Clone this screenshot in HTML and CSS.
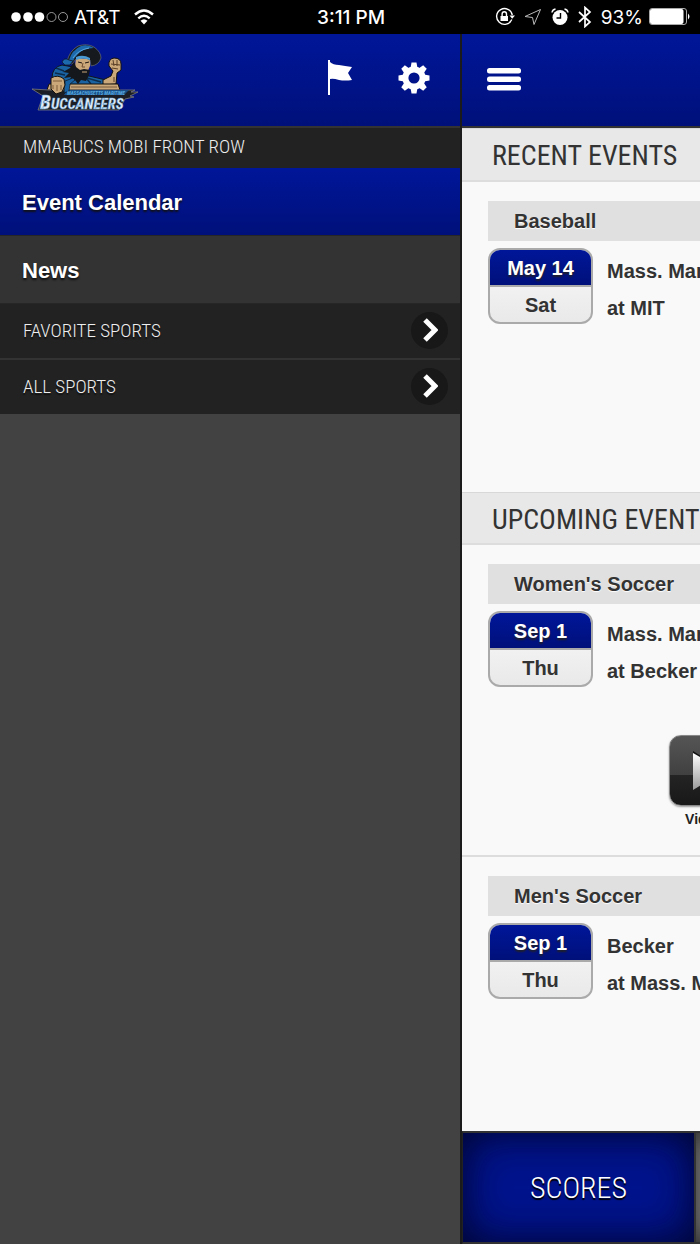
FILE: index.html
```html
<!DOCTYPE html>
<html lang="en">
<head>
  <meta charset="UTF-8" />
  <meta name="viewport" content="width=device-width, initial-scale=1.0" />
  <title>MMABUCS Mobi Front Row</title>
  <link rel="stylesheet" href="styles.css">
</head>
<body>
  <div class="status-bar">
    <div class="status-left">
      <svg width="58" height="12" viewBox="0 0 58 12">
        <g fill="#fff"><circle cx="5" cy="6" r="4.8"/><circle cx="17" cy="6" r="4.8"/><circle cx="28.500" cy="6" r="4.800"/></g>
        <g fill="none" stroke="#bbb" stroke-width="0.8"><circle cx="40.500" cy="6" r="4.500"/><circle cx="52" cy="6" r="4.500"/></g>
      </svg>
      <span class="carrier">AT&amp;T</span>
      <svg class="wifi" width="20" height="16" viewBox="0 0 20 16">
        <g fill="none" stroke="#fff" stroke-width="2.400"><path d="M1 5.500Q10-2.500 19 5.500M4.300 9.300Q10 4.300 15.700 9.300"/></g>
        <path d="M6.500 11.800Q10 8.800 13.500 11.800L10 15.500Z" fill="#fff"/>
      </svg>
    </div>
    <span class="clock">3:11 PM</span>
    <div class="status-right">
      <svg width="20" height="20" viewBox="0 0 20 20" fill="none" stroke="#fff" stroke-width="1.400">
        <path d="M16.800 12.500A7.900 7.900 0 1 1 17.300 8"/>
        <path d="M14.500 8.500h5.500l-2.800 3.300z" fill="#fff" stroke="none"/>
        <path d="M5.500 9h7.500v5H5.500z" fill="#fff" stroke="none"/>
        <path d="M7.100 9V7a2.200 2.200 0 0 1 4.400 0v2"/>
      </svg>
      <svg width="18" height="18" viewBox="0 0 18 18" fill="none" stroke="#bbb" stroke-width="1"><path d="M16.500 1.500 1 8.500l7.500 1 1.500 7z"/></svg>
      <svg width="18" height="18" viewBox="0 0 18 18">
        <circle cx="9" cy="9.500" r="7.500" fill="#fff"/>
        <path d="M9.500 5v5H5.500" fill="none" stroke="#000" stroke-width="1.400"/>
        <path d="M1 4.500Q1.500 1.500 4.500 1M13.500 1Q16.500 1.500 17 4.500" fill="none" stroke="#fff" stroke-width="1.500"/>
      </svg>
      <svg width="14" height="22" viewBox="0 0 14 22" fill="none" stroke="#fff" stroke-width="1.700"><path d="M1 6l11 10-5 4.500V1.500L12 6 1 16"/></svg>
      <span class="percent">93%</span>
      <svg width="42" height="18" viewBox="0 0 42 18">
        <rect x="0.500" y="0.500" width="37" height="16" rx="2.500" fill="none" stroke="#aaa"/>
        <rect x="1" y="1" width="33.500" height="15" rx="2" fill="#fff"/>
        <path d="M39 5.500q3 3 0 6z" fill="#fff"/>
      </svg>
    </div>
  </div>

  <div class="app">
    <aside class="sidebar">
      <header class="sidebar-header">
        <svg class="logo" width="108" height="68" viewBox="0 0 108 68" role="img" aria-label="Massachusetts Maritime Buccaneers">
          <!-- coat -->
          <path d="M21 34Q21 23 31 21L42 23 46 31 58 32 75 36 76 42 22 42Z" fill="#1a63a3" stroke="#10151c"/>
          <path d="M25 24l8 3M24 29l10 2M56 34l14 4M60 40l-4-5" fill="none" stroke="#0b2c4d" stroke-width="1.500"/>
          <!-- raised fist -->
          <path d="M72 36L80 32 82 27 78 22Q77 15 83 14Q90 14 90 20L90 26 86 29 85 40 72 41Z" fill="#cba87a" stroke="#15120f"/>
          <path d="M80 20l9 1M82 16l1 6M86 16l0 6M81 24l6 1M83 33v5" fill="none" stroke="#5a4027"/>
          <!-- face -->
          <path d="M45 14L59 15 59 22 56 29 48 29 44 22Z" fill="#cba87a"/>
          <path d="M47 18l4 1M54 19l4-1" stroke="#1b1511"/>
          <path d="M52 19l-1 4 3 0" fill="none" stroke="#6d4e31"/>
          <!-- beard -->
          <path d="M43 17L45 23 49 26 53 25 59 26 58 31 55 37 50 36 47 40 44 36 38 38 40 33 33 34 38 29 32 28 39 24Z" fill="#14171b"/>
          <path d="M51 28l5 0" stroke="#cba87a"/>
          <!-- hat -->
          <path d="M36 18Q38 7 47 2Q56-1 63 3Q70 8 70 14Q68 21 60 22L59 16Q52 12 45 15L41 20Z" fill="#16191d" stroke="#686f76" stroke-width="0.700"/>
          <path d="M38 16Q41 6 50 2Q57 0 63 4Q52 4 47 10Q43 14 42 17Z" fill="#1c69ad"/>
          <path d="M42 14Q47 6 58 4" fill="none" stroke="#5aa7dc"/>
          <path d="M45 13Q52 10 59 14L59 16Q52 13 45 16Z" fill="#4a9ad4"/>
          <path d="M31 18Q33 13 38 16L42 17 39 21 34 21Z" fill="#1c69ad" stroke="#10151c" stroke-width="0.700"/>
          <!-- table -->
          <path d="M18 40H87L89 46H16Z" fill="#cba87a" stroke="#15120f"/>
          <path d="M40 43H86" stroke="#755b3d"/>
          <!-- name plate -->
          <path d="M1 45L18 46 104 46 100 48 107 48 99 52 103 53 94 55 88 66 7 66 12 52Z" fill="#1b1f25" stroke="#8b8780" stroke-width="0.700"/>
          <path d="M36 46H98L93 51H33Z" fill="#174f86"/>
          <!-- hand and pistol -->
          <path d="M34 37l8-3 2 2-5 4-1 7-5 2z" fill="#1a63a3" stroke="#10151c" stroke-width="0.700"/>
          <path d="M20 34Q27 30 33 35L34 41 31 48 25 50 20 45Z" fill="#cba87a" stroke="#15120f"/>
          <path d="M22 41v4M26 41v6M30 41v5M22 37l9 0" fill="none" stroke="#7d5c39"/>
          <text class="logo-small" x="36" y="51">MASSACHUSETTS MARITIME</text>
          <text class="logo-name" x="9" y="65"><tspan class="logo-initial">B</tspan>UCCANEERS</text>
        </svg>
        <div class="header-actions">
          <button type="button" class="icon-button" aria-label="Favorites">
            <svg width="26" height="36" viewBox="0 0 26 36" fill="#fff"><path d="M2 0h2v35H2zM4 2Q7 5 13 5Q19 6 26 7L22 13 26 20Q19 21 13 20Q7 18 4 19Z"/></svg>
          </button>
          <button type="button" class="icon-button" aria-label="Settings">
            <svg width="32" height="32" viewBox="-16 -16 32 32">
              <circle r="8.600" fill="none" stroke="#fff" stroke-width="6"/>
              <g fill="#fff">
                <path id="tooth" d="M-3.500-10L-2.500-15.500h5L3.500-10z"/>
                <use href="#tooth" transform="rotate(45)"/><use href="#tooth" transform="rotate(90)"/>
                <use href="#tooth" transform="rotate(135)"/><use href="#tooth" transform="rotate(180)"/>
                <use href="#tooth" transform="rotate(225)"/><use href="#tooth" transform="rotate(270)"/>
                <use href="#tooth" transform="rotate(315)"/>
              </g>
            </svg>
          </button>
        </div>
      </header>

      <nav class="menu">
        <h2 class="menu-title">MMABUCS MOBI FRONT ROW</h2>
        <a href="#events" class="menu-link active">Event Calendar</a>
        <a href="#news" class="menu-link">News</a>
        <button type="button" class="menu-group">
          FAVORITE SPORTS
          <span class="arrow"><svg width="16" height="24" viewBox="0 0 16 24" fill="none" stroke="#fff" stroke-width="5"><path d="M3 2l10 10L3 22"/></svg></span>
        </button>
        <button type="button" class="menu-group">
          ALL SPORTS
          <span class="arrow"><svg width="16" height="24" viewBox="0 0 16 24" fill="none" stroke="#fff" stroke-width="5"><path d="M3 2l10 10L3 22"/></svg></span>
        </button>
      </nav>
    </aside>

    <main class="page">
      <div class="page-inner">
        <header class="page-header">
          <button type="button" class="icon-button" aria-label="Menu">
            <svg width="34" height="24" viewBox="0 0 34 24" fill="#fff"><rect y="1" width="34" height="5.500" rx="2.500"/><rect y="9.500" width="34" height="5.500" rx="2.500"/><rect y="18" width="34" height="5.500" rx="2.500"/></svg>
          </button>
        </header>

        <div class="events" id="events">
          <h2 class="section-title">RECENT EVENTS</h2>
          <article class="event">
            <h3 class="sport">Baseball</h3>
            <div class="event-row">
              <div class="date"><span class="day">May 14</span><span class="weekday">Sat</span></div>
              <div class="teams"><div>Mass. Maritime</div><div>at MIT</div></div>
            </div>
          </article>

          <h2 class="section-title">UPCOMING EVENTS</h2>
          <article class="event">
            <h3 class="sport">Women's Soccer</h3>
            <div class="event-row">
              <div class="date"><span class="day">Sep 1</span><span class="weekday">Thu</span></div>
              <div class="teams"><div>Mass. Maritime</div><div>at Becker</div></div>
            </div>
            <div class="media">
              <a href="#video" class="video-link">
                <span class="video-icon"><svg width="32" height="40" viewBox="0 0 32 40"><defs><linearGradient id="play" x2="0" y2="1"><stop stop-color="#fff"/><stop offset="1" stop-color="#999"/></linearGradient></defs><path d="M0 0l32 20L0 38z" fill="#111"/><path d="M0 2l32 18L0 39z" fill="url(#play)"/></svg></span>
                Video
              </a>
            </div>
          </article>
          <article class="event">
            <h3 class="sport">Men's Soccer</h3>
            <div class="event-row">
              <div class="date"><span class="day">Sep 1</span><span class="weekday">Thu</span></div>
              <div class="teams"><div>Becker</div><div>at Mass. Maritime</div></div>
            </div>
          </article>
        </div>

        <nav class="tabs">
          <a href="#scores" class="tab active">SCORES</a>
          <a href="#news" class="tab">NEWS</a>
          <a href="#more" class="tab">MORE</a>
        </nav>
      </div>
    </main>
  </div>
</body>
</html>
```
FILE: styles.css
```css
* {
  box-sizing: border-box;
}
body {
  margin: 0;
  height: 100vh;
  display: flex;
  flex-direction: column;
  overflow: hidden;
  background: #424242;
  color: #333;
  font-family: "Liberation Sans", Arial, sans-serif;
  font-size: 20px;
}
h2, h3 {
  margin: 0;
}
a {
  text-decoration: none;
}
button {
  border: none;
  font: inherit;
  cursor: pointer;
}
svg {
  display: block;
  flex-shrink: 0;
}

/* status bar */
.status-bar {
  flex: 0 0 34px;
  display: grid;
  grid-template-columns: 1fr auto 1fr;
  align-items: center;
  padding: 0 9px 0 11px;
  background: #000;
  color: #fff;
  font-family: Inter, sans-serif;
}
.status-left, .status-right {
  display: flex;
  align-items: center;
}
.status-left {
  gap: 5px;
}
.wifi {
  margin-left: 8px;
}
.status-right {
  justify-content: flex-end;
  gap: 9px;
}
.clock {
  font-size: 19px;
  font-weight: 500;
}
.carrier, .percent {
  font-size: 19px;
}
.percent + svg {
  margin-left: -3px;
}

.app {
  flex: 1;
  display: flex;
  min-height: 0;
}

/* left menu */
.sidebar {
  flex: 0 0 66%;
  border-right: 2px solid #1b1b1b;
  background: #424242;
}
.sidebar-header, .page-header {
  display: flex;
  align-items: center;
  height: 94px;
  border-bottom: 2px solid #333;
  background: linear-gradient(#001699, #00107a);
}
.sidebar-header {
  justify-content: space-between;
  padding: 0 30px 4px 31px;
}
.header-actions {
  display: flex;
  align-items: center;
  gap: 46px;
}
.icon-button {
  padding: 0;
  background: none;
}
.logo-small {
  fill: #5aa9df;
  font: italic bold 5px "Liberation Sans Narrow", "Roboto Condensed", sans-serif;
}
.logo-name {
  fill: #e4eef8;
  stroke: #5b9ace;
  stroke-width: 0.4px;
  font: italic bold 15px "Liberation Sans Narrow", "Roboto Condensed", sans-serif;
}
.logo-initial {
  font-size: 20px;
}
.menu-title, .menu-group, .section-title, .tab {
  font-family: "Liberation Sans Narrow", "Roboto Condensed", sans-serif;
  font-weight: 300;
}
.menu-title {
  height: 40px;
  padding-left: 23px;
  background: #222;
  color: #eee;
  font-size: 19px;
  line-height: 38px;
}
.menu-link {
  display: block;
  height: 68px;
  padding-left: 22px;
  border-bottom: 1px solid #262626;
  background: #333;
  color: #fff;
  font-size: 22px;
  font-weight: bold;
  line-height: 70px;
  text-shadow: 0 2px 2px #111;
}
.menu-link.active {
  background: linear-gradient(#001699, #00107a);
}
.menu-group {
  display: flex;
  align-items: center;
  justify-content: space-between;
  width: 100%;
  height: 54px;
  padding: 0 12px 2px 23px;
  background: #222;
  color: #eee;
  font-size: 19px;
  text-shadow: 0 2px 1px #111;
}
.menu-group + .menu-group {
  height: 56px;
  border-top: 2px solid #333;
}
.arrow {
  display: grid;
  place-items: center;
  width: 37px;
  height: 37px;
  border-radius: 50%;
  background: #181818;
}

/* page pushed aside by the menu */
.page {
  flex: 1;
  min-width: 0;
  overflow: hidden;
  background: #f9f9f9;
}
.page-inner {
  display: flex;
  flex-direction: column;
  width: 100vw;
  height: 100%;
}
.page-header {
  flex-shrink: 0;
  padding: 0 25px 2px;
}
.events {
  flex: 1;
  min-height: 0;
}
.section-title {
  height: 54px;
  padding-left: 30px;
  border-top: 1px solid #d8d8d8;
  border-bottom: 2px solid #ddd;
  background: #e8e8e8;
  font-size: 28px;
  font-weight: 400;
  line-height: 54px;
}
.event {
  min-height: 310px;
  padding: 19px 26px;
}
.section-title ~ .section-title {
  height: 53px;
}
.event + .event {
  border-top: 2px solid #ddd;
}
.sport {
  height: 40px;
  padding-left: 26px;
  background: #e0e0e0;
  font-size: 20px;
  line-height: 40px;
  text-shadow: 0 1px 1px #fff;
}
.event-row {
  display: flex;
  gap: 14px;
  margin-top: 7px;
}
.date {
  width: 105px;
  height: 76px;
  border: 2px solid #aaa;
  border-radius: 12px;
  overflow: hidden;
  background: linear-gradient(#fafafa, #e9e9e9);
  font-weight: bold;
  text-align: center;
}
.day, .weekday {
  display: block;
  height: 36px;
  line-height: 36px;
}
.day {
  height: 37px;
  border-bottom: 2px solid #aaa;
  background: linear-gradient(#001699, #00107a);
  color: #fff;
  text-shadow: 0 2px 2px #222;
}
.teams {
  padding-top: 5px;
  font-weight: bold;
  line-height: 37px;
}
.media {
  display: flex;
  justify-content: center;
  padding: 45px 216px 0 0;
}
.video-link {
  display: flex;
  flex-direction: column;
  align-items: center;
  gap: 5px;
  color: #222;
  font-size: 14px;
  font-weight: bold;
}
.video-icon {
  display: flex;
  align-items: center;
  width: 71px;
  height: 71px;
  padding-left: 23px;
  border: 1px solid #888;
  border-radius: 12px;
  background: linear-gradient(#555, #404040) 0 0 / 100% 57% no-repeat, linear-gradient(#333, #181818);
  box-shadow: 0 1px 2px #999;
}

/* bottom tabs */
.tabs {
  flex-shrink: 0;
  display: flex;
  height: 113px;
  border: 2px solid #333;
  border-left: 1px solid #222;
  background: #333;
  gap: 2px;
}
.tab {
  flex: 1;
  display: grid;
  place-items: center;
  background: #888;
  box-shadow: inset 0 0 30px #222;
  color: #fff;
  font-size: 30px;
  text-shadow: 0 2px 1px #000;
}
.tab.active {
  background: #00138c;
  box-shadow: inset 0 0 44px #000428;
}
```
